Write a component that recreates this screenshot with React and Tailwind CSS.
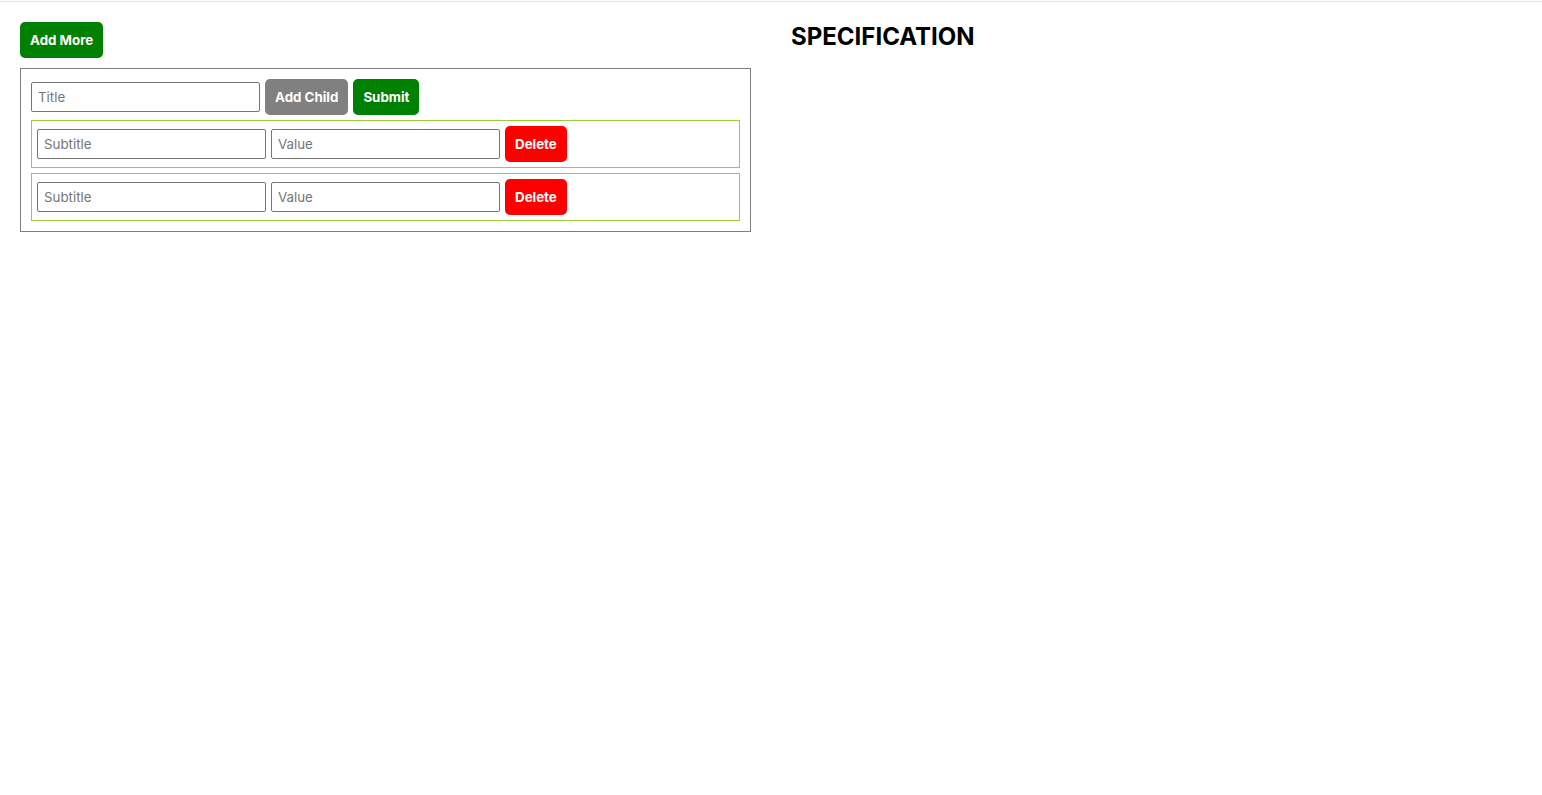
export default function App() {
  const children = [0, 1]
  const inputCls =
    'w-[229px] h-[30px] px-[6px] border border-[#767676] rounded-[2px] text-[13.333px] placeholder:text-[#757575] outline-none'
  return (
    <div className="min-h-screen bg-white" style={{ fontFamily: 'Inter, "Noto Sans", sans-serif' }}>
      <div className="mt-px border-t border-[#e3e3e3]" />
      <div className="grid grid-cols-2">
        <div className="px-5 pt-5">
          <button className="h-9 px-2.5 pt-px rounded-[5px] bg-[#008000] text-white text-[13.333px] font-bold">
            Add More
          </button>
          <div className="mt-[10px] border border-[#808080] p-2.5">
            <div className="flex items-center gap-[5px]">
              <input placeholder="Title" className={inputCls} />
              <button className="h-9 px-2.5 pt-px rounded-[5px] bg-[#808080] text-white text-[13.333px] font-bold">
                Add Child
              </button>
              <button className="h-9 px-2.5 pt-px rounded-[5px] bg-[#008000] text-white text-[13.333px] font-bold">
                Submit
              </button>
            </div>
            {children.map((i) => (
              <div key={i} className="mt-[5px] border border-[#9acd32] p-[5px] flex items-center gap-[5px]">
                <input placeholder="Subtitle" className={inputCls} />
                <input placeholder="Value" className={inputCls} />
                <button className="h-9 px-2.5 pt-px rounded-[5px] bg-[#ff0000] text-white text-[13.333px] font-bold">
                  Delete
                </button>
              </div>
            ))}
          </div>
        </div>
        <div className="px-5 pt-5">
          <h2 className="text-[24px] font-bold text-black leading-[30px]">SPECIFICATION</h2>
        </div>
      </div>
    </div>
  )
}
